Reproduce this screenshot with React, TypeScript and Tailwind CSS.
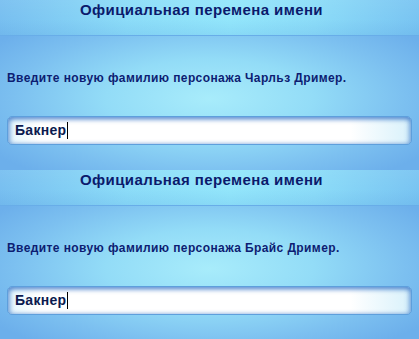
const FONT = "font-['Liberation_Sans','Noto_Sans',Arial,sans-serif]";

function RenamePanel({ name }: { name: string }) {
  return (
    <div className="h-[170px] flex flex-col bg-[radial-gradient(ellipse_62%_58%_at_50%_58%,#a8ecfb_0%,#93dcf7_40%,#7cc0f0_75%,#6cafeb_100%)]">
      {/* title band */}
      <div className="h-[36px] shrink-0 border-b border-[#68ade8] bg-[linear-gradient(180deg,rgba(255,255,255,0.05)_0%,rgba(255,255,255,0)_55%,rgba(60,130,210,0.12)_100%),linear-gradient(90deg,#78bff0_0%,#8cdcf8_30%,#93e6fb_55%,#8cdcf8_75%,#79c4f2_100%)]">
        <h1 className="pt-[1px] pr-[16px] text-center text-[15px] leading-[18px] font-bold tracking-[0.4px] text-[#0b1a6c]">
          Официальная перемена имени
        </h1>
      </div>

      <div className="px-[7px]">
        <p className="mt-[35px] text-[12px] leading-[15px] font-bold text-[#0d1d72] tracking-[0.4px]">
          Введите новую фамилию персонажа {name}.
        </p>

        <div className="mt-[30px] h-[29px] rounded-[5px] border border-[#5e9fdc] bg-[linear-gradient(90deg,#e4f6fd_0%,#ffffff_8%,#ffffff_85%,#d8f1fb_100%)] shadow-[inset_0_3px_4px_rgba(40,105,195,0.55),inset_3px_0_4px_rgba(40,105,195,0.35),inset_-3px_0_4px_rgba(40,105,195,0.3)] flex items-center pl-[7px]">
          <span className="text-[14px] leading-[17px] font-bold text-[#0b1a4f] tracking-[0.3px]">Бакнер</span>
          <span className="ml-[1px] w-[1px] h-[17px] bg-black" />
        </div>
      </div>
    </div>
  );
}

export default function App() {
  return (
    <div className={`w-[419px] h-[339px] overflow-hidden ${FONT}`}>
      <RenamePanel name="Чарльз Дример" />
      <RenamePanel name="Брайс Дример" />
    </div>
  );
}
